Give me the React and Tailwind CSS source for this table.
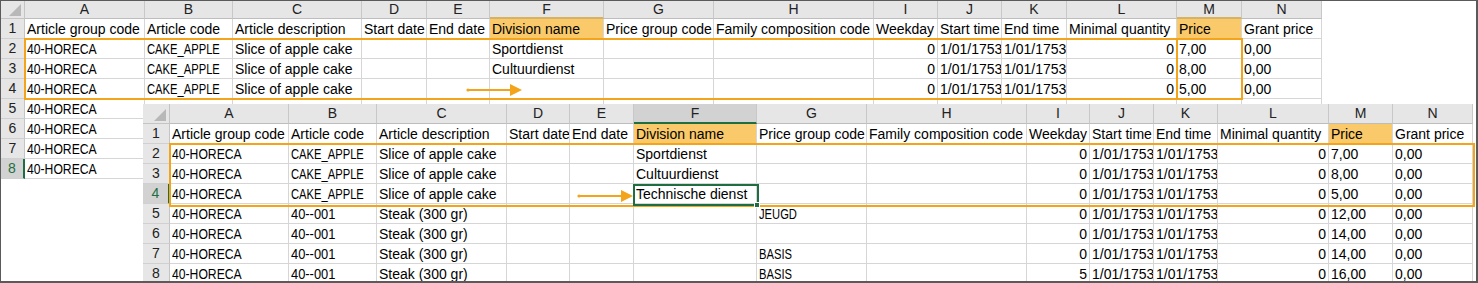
import React from 'react';

const topCols = [
  { k: 'A', w: 'w-[120px]' },
  { k: 'B', w: 'w-[88px]' },
  { k: 'C', w: 'w-[129px]' },
  { k: 'D', w: 'w-[65px]' },
  { k: 'E', w: 'w-[63px]' },
  { k: 'F', w: 'w-[114px]', mark: 'tan' },
  { k: 'G', w: 'w-[110px]' },
  { k: 'H', w: 'w-[160px]' },
  { k: 'I', w: 'w-[64px]', num: true },
  { k: 'J', w: 'w-[64px]' },
  { k: 'K', w: 'w-[65px]' },
  { k: 'L', w: 'w-[110px]', num: true },
  { k: 'M', w: 'w-[65px]', mark: 'tan' },
  { k: 'N', w: 'w-[80px]' },
];

const bottomCols = [
  { k: 'A', w: 'w-[119px]' },
  { k: 'B', w: 'w-[88px]' },
  { k: 'C', w: 'w-[130px]' },
  { k: 'D', w: 'w-[63px]' },
  { k: 'E', w: 'w-[64px]' },
  { k: 'F', w: 'w-[123px]', mark: 'green' },
  { k: 'G', w: 'w-[110px]' },
  { k: 'H', w: 'w-[160px]' },
  { k: 'I', w: 'w-[63px]', num: true },
  { k: 'J', w: 'w-[64px]' },
  { k: 'K', w: 'w-[64px]' },
  { k: 'L', w: 'w-[111px]', num: true },
  { k: 'M', w: 'w-[64px]' },
  { k: 'N', w: 'w-[80px]' },
];

const head = [
  'Article group code', 'Article code', 'Article description', 'Start date', 'End date',
  'Division name', 'Price group code', 'Family composition code', 'Weekday', 'Start time',
  'End time', 'Minimal quantity', 'Price', 'Grant price',
];

const row = (c, div, grp, wd, price) => [
  '40-HORECA', c[0], c[1], '', '', div, grp, '', wd, '1/01/1753', '1/01/1753', '0', price, '0,00',
];

const cake = ['CAKE_APPLE', 'Slice of apple cake'];
const steak = ['40--001', 'Steak (300 gr)'];
const onlyA = ['40-HORECA', '', '', '', '', '', '', '', '', '', '', '', '', ''];

const topRows = [
  head,
  row(cake, 'Sportdienst', '', '0', '7,00'),
  row(cake, 'Cultuurdienst', '', '0', '8,00'),
  row(cake, '', '', '0', '5,00'),
  onlyA, onlyA, onlyA, onlyA,
];

const bottomRows = [
  head,
  row(cake, 'Sportdienst', '', '0', '7,00'),
  row(cake, 'Cultuurdienst', '', '0', '8,00'),
  row(cake, 'Technische dienst', '', '0', '5,00'),
  row(steak, '', 'JEUGD', '0', '12,00'),
  row(steak, '', '', '0', '14,00'),
  row(steak, '', 'BASIS', '0', '14,00'),
  row(steak, '', 'BASIS', '5', '16,00'),
];

function squeeze(t) {
  if (t === '40-HORECA') return 'inline-block origin-left scale-x-[0.87]';
  if (t === '40--001') return 'inline-block origin-left scale-x-[0.92]';
  if (/^[A-Z_]{3,}$/.test(t)) return 'inline-block origin-left scale-x-[0.8]';
  return '';
}

function Corner({ w, h }) {
  return (
    <div className={`${w} ${h} shrink-0 relative bg-[#e6e6e6] border-r border-b border-[#c4c4c4]`}>
      <svg className="absolute right-[3px] bottom-[2px]" width="12" height="12" viewBox="0 0 12 12">
        <polygon points="12,0 12,12 0,12" fill="#b8b8b8" />
      </svg>
    </div>
  );
}

function Sheet({ cols, rowW, headH, rows, selRow, className = '' }) {
  return (
    <div className={`flex flex-col bg-white ${className}`}>
      <div className="flex">
        <Corner w={rowW} h={headH} />
        {cols.map((c) => (
          <div
            key={c.k}
            className={`${c.w} ${headH} shrink-0 flex items-center justify-center border-r border-[#c8c8c8] text-[#222] ${
              c.mark === 'green'
                ? 'bg-[#d2d2d2] border-b-2 border-b-[#1e6e41]'
                : c.mark === 'tan'
                ? 'bg-[#e6e6e6] border-b-2 border-b-[#d6b264]'
                : 'bg-[#e6e6e6] border-b border-b-[#bdbdbd]'
            }`}
          >
            {c.k}
          </div>
        ))}
      </div>
      {rows.map((r, i) => (
        <div key={i} className="flex h-5">
          <div
            className={`${rowW} h-5 shrink-0 flex items-center justify-center border-b border-[#d0d0d0] ${
              selRow === i + 1
                ? 'bg-[#d2d2d2] text-[#1e6e41] border-r-2 border-r-[#1e6e41]'
                : 'bg-[#e6e6e6] text-[#222] border-r border-r-[#c4c4c4]'
            }`}
          >
            {i + 1}
          </div>
          {cols.map((c, j) => {
            const fill = i === 0 && (c.k === 'F' || c.k === 'M');
            const right = c.num && i > 0;
            return (
              <div
                key={c.k}
                className={`${c.w} h-5 shrink-0 overflow-hidden whitespace-nowrap px-[2px] leading-[20px] border-r border-b border-[#d6d6d6] ${
                  fill ? 'bg-[#f9c96a]' : ''
                } ${right ? 'text-right' : 'text-left'}`}
              >
                <span className={squeeze(r[j])}>{r[j]}</span>
              </div>
            );
          })}
        </div>
      ))}
    </div>
  );
}

function Arrow({ className }) {
  return (
    <svg className={`absolute ${className}`} width="58" height="14" viewBox="0 0 58 14">
      <line x1="2" y1="7" x2="46" y2="7" stroke="#f4a41a" strokeWidth="2" strokeLinecap="round" />
      <circle cx="2" cy="7" r="1.6" fill="#f4a41a" />
      <polygon points="44,1 56,7 44,13" fill="#f4a41a" />
    </svg>
  );
}

export default function App() {
  return (
    <div className="w-[1478px] h-[283px] relative overflow-hidden bg-white border-t border-l border-r-2 border-b-2 border-[#5a5a5a] font-['Liberation_Sans',Arial,sans-serif] text-[14px] text-black">
      <Sheet cols={topCols} rowW="w-[24px]" headH="h-[18px]" rows={topRows} selRow={8} className="w-[1321px]" />

      {/* top selection box */}
      <div className="absolute left-[23px] top-[37px] w-[1219px] h-[62px] border-2 border-[#f4a41a]" />
      <div className="absolute left-[1175px] top-[37px] w-[2px] h-[62px] bg-[#f4a41a]" />
      <Arrow className="left-[465px] top-[82px]" />

      {/* second screenshot laid over the first */}
      <div className="absolute left-[142px] top-[103px]">
        <Sheet cols={bottomCols} rowW="w-[27px]" headH="h-5" rows={bottomRows} selRow={4} />
      </div>
      <div className="absolute left-[168px] top-[142px] w-[1306px] h-[64px] border-2 border-[#f4a41a]" />
      <Arrow className="left-[576px] top-[188px]" />
      <div className="absolute left-[632px] top-[183px] w-[126px] h-[22px] border-2 border-[#1e6e41]" />
      <div className="absolute left-[753px] top-[201px] w-[6px] h-[6px] bg-[#1e6e41] border border-white" />
    </div>
  );
}
